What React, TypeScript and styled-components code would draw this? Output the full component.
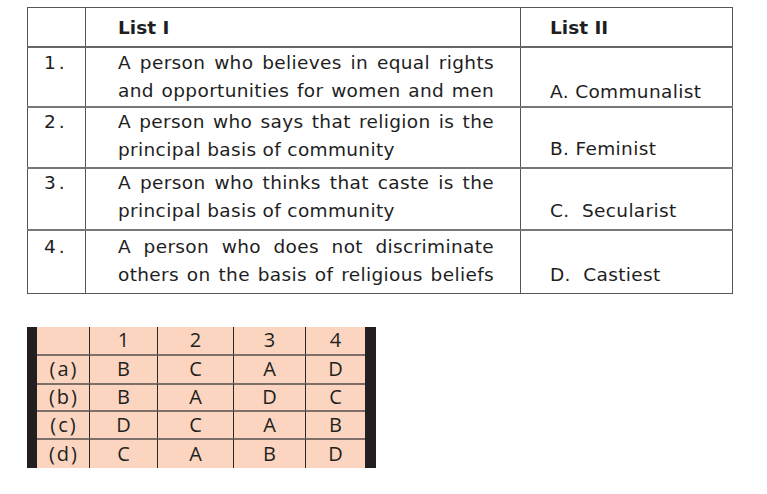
import React from "react";
import styled, { createGlobalStyle } from "styled-components";

const Global = createGlobalStyle`
  html, body { margin: 0; padding: 0; background: #ffffff; }
  body { width: 767px; height: 494px; overflow: hidden; }
`;

const Page = styled.div`
  padding: 7px 0 0 27px;
  display: flex;
  flex-direction: column;
  align-items: flex-start;
  gap: 33px;
  font-family: "DejaVu Sans", Verdana, sans-serif;
  color: #1e1e1e;
`;

const MatchTable = styled.table`
  border-collapse: collapse;
  table-layout: fixed;
  width: 705px;
  border: 1.5px solid #3a3a3a;
  font-size: 18.5px;
  letter-spacing: 0.35px;
`;

const HeadCell = styled.th<{ $pad: number }>`
  height: 38px;
  padding: 0 0 0 ${(p) => p.$pad}px;
  text-align: left;
  font-weight: bold;
  letter-spacing: 0;
  border: 1px solid #555;
  border-bottom: 2px solid #666;
  vertical-align: middle;
`;

const Row = styled.tr<{ $h: number }>`
  height: ${(p) => p.$h}px;
`;

const NumCell = styled.td<{ $top: number }>`
  padding: ${(p) => p.$top}px 0 0 16px;
  text-align: left;
  vertical-align: top;
  line-height: 28px;
  letter-spacing: 3px;
  border: 1px solid #555;
  border-top: 2px solid #777;
`;

const TextCell = styled.td<{ $top: number }>`
  padding: ${(p) => p.$top}px 26px 0 32px;
  vertical-align: top;
  line-height: 28px;
  border: 1px solid #555;
  border-top: 2px solid #777;
`;

const AnswerCell = styled.td<{ $bottom: number }>`
  padding: 0 0 ${(p) => p.$bottom}px 29px;
  vertical-align: bottom;
  line-height: 28px;
  white-space: pre;
  border: 1px solid #555;
  border-top: 2px solid #777;
`;

const Line = styled.div<{ $justify: boolean }>`
  text-align: ${(p) => (p.$justify ? "justify" : "left")};
  text-align-last: ${(p) => (p.$justify ? "justify" : "left")};
`;

const KeyTable = styled.div`
  display: grid;
  grid-template-columns: 52px 68px 76px 72px 60px;
  grid-template-rows: 27px 29px 27px 28px 30px;
  background: #fcd5c1;
  border-left: 10px solid #231f20;
  border-right: 11px solid #231f20;
  font-family: "Open Sans", "Noto Sans", sans-serif;
  font-size: 20px;
  color: #231f20;
`;

const KeyCell = styled.div<{ $first: boolean; $col: number }>`
  display: flex;
  align-items: center;
  justify-content: center;
  line-height: 1;
  border-top: ${(p) => (p.$first ? "none" : "2px solid #7d706a")};
  border-left: ${(p) => (p.$col === 0 ? "none" : "1px solid #2a2a2a")};
  letter-spacing: ${(p) => (p.$col === 0 ? "2px" : "0")};
  padding-left: ${(p) => (p.$col === 0 ? "2px" : "0")};
`;

const rows = [
  { n: "1.", lines: ["A person who believes in equal rights", "and opportunities for women and men"], justifyLast: true, ans: "A. Communalist", h: 60, top: 1, bottom: 0 },
  { n: "2.", lines: ["A person who says that religion is the", "principal basis of community"], justifyLast: false, ans: "B. Feminist", h: 61, top: 0, bottom: 4 },
  { n: "3.", lines: ["A person who thinks that caste is the", "principal basis of community"], justifyLast: false, ans: "C.  Secularist", h: 62, top: 0, bottom: 4 },
  { n: "4.", lines: ["A person who does not discriminate", "others on the basis of religious beliefs"], justifyLast: true, ans: "D.  Castiest", h: 63, top: 2, bottom: 4 },
];

const key = [
  ["", "1", "2", "3", "4"],
  ["(a)", "B", "C", "A", "D"],
  ["(b)", "B", "A", "D", "C"],
  ["(c)", "D", "C", "A", "B"],
  ["(d)", "C", "A", "B", "D"],
];

export default function App() {
  return (
    <>
      <Global />
      <Page>
        <MatchTable>
          <colgroup>
            <col style={{ width: 58 }} />
            <col style={{ width: 435 }} />
            <col style={{ width: 212 }} />
          </colgroup>
          <thead>
            <tr>
              <HeadCell $pad={0}></HeadCell>
              <HeadCell $pad={32}>List I</HeadCell>
              <HeadCell $pad={29}>List II</HeadCell>
            </tr>
          </thead>
          <tbody>
            {rows.map((r) => (
              <Row key={r.n} $h={r.h}>
                <NumCell $top={r.top}>{r.n}</NumCell>
                <TextCell $top={r.top}>
                  {r.lines.map((l, i) => (
                    <Line key={i} $justify={i === 0 || r.justifyLast}>
                      {l}
                    </Line>
                  ))}
                </TextCell>
                <AnswerCell $bottom={r.bottom}>{r.ans}</AnswerCell>
              </Row>
            ))}
          </tbody>
        </MatchTable>
        <KeyTable>
          {key.map((row, ri) =>
            row.map((c, ci) => (
              <KeyCell key={`${ri}-${ci}`} $first={ri === 0} $col={ci}>
                {c}
              </KeyCell>
            ))
          )}
        </KeyTable>
      </Page>
    </>
  );
}
